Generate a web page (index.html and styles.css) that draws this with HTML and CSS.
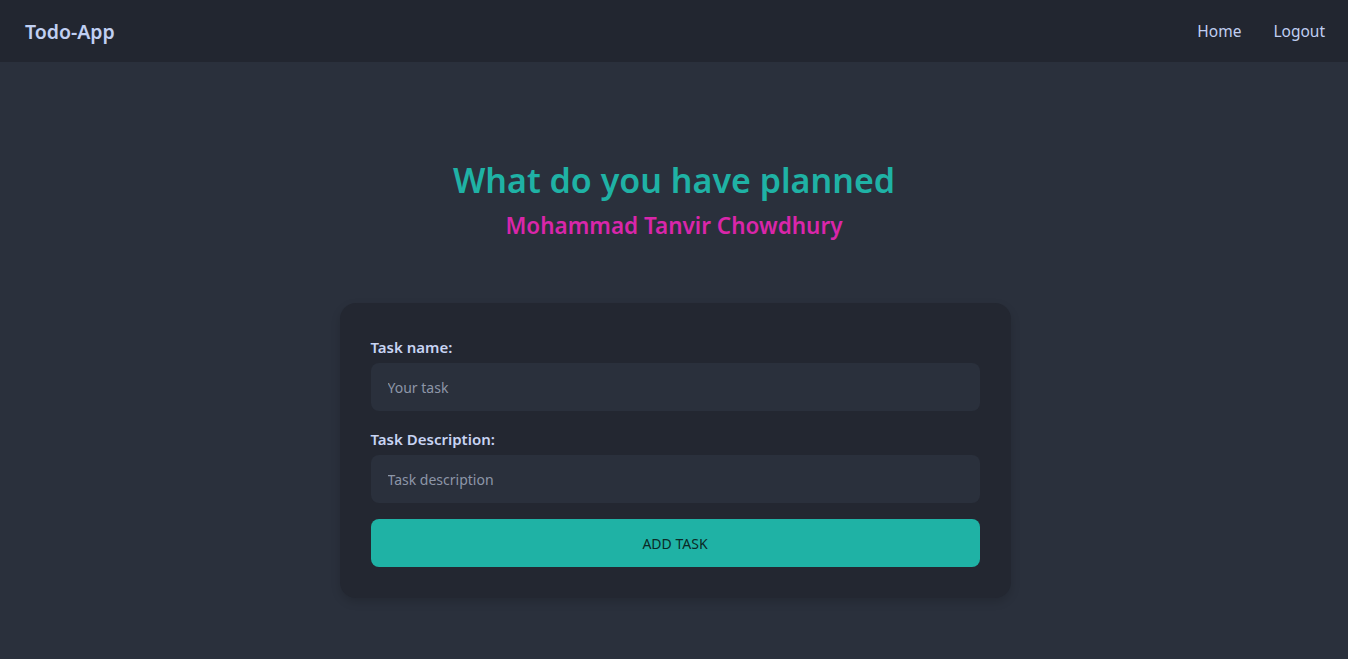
FILE: index.html
```html
<!DOCTYPE html>
<html lang="en">
<head>
<meta charset="utf-8">
<title>Todo-App</title>
<link rel="stylesheet" href="styles.css">
</head>
<body>
<nav class="navbar">
  <a class="brand" href="#">Todo-App</a>
  <div class="nav-links">
    <a href="#">Home</a>
    <a href="#">Logout</a>
  </div>
</nav>
<main class="main">
  <h1 class="title">What do you have planned</h1>
  <h2 class="subtitle">Mohammad Tanvir Chowdhury</h2>
  <form class="card">
    <label class="label" for="task">Task name:</label>
    <input class="input" id="task" type="text" placeholder="Your task">
    <label class="label label-gap" for="desc">Task Description:</label>
    <input class="input" id="desc" type="text" placeholder="Task description">
    <button class="btn" type="button">ADD TASK</button>
  </form>
</main>
</body>
</html>
```
FILE: styles.css
```css
* { box-sizing: border-box; }
html, body { margin: 0; padding: 0; }
body {
  background: #2a303c;
  font-family: "Noto Sans", "Open Sans", sans-serif;
  color: #c8d4f3;
  min-height: 100vh;
}
a { text-decoration: none; color: inherit; }
.navbar {
  height: 62px;
  background: #222630;
  display: flex;
  align-items: center;
  justify-content: space-between;
  padding: 0 23px 0 25px;
}
.brand {
  font-size: 19.5px;
  font-weight: 600;
  color: #c0cff2;
}
.nav-links {
  display: flex;
  gap: 32px;
  font-size: 15.5px;
  color: #c0cff2;
}
.main {
  display: flex;
  flex-direction: column;
  align-items: center;
  padding-top: 98px;
}
.title {
  margin: 0;
  font-size: 34px;
  line-height: 40px;
  font-weight: 600;
  color: #1fb2a5;
}
.subtitle {
  margin: 10px 0 0;
  font-size: 22.5px;
  line-height: 32px;
  font-weight: 600;
  color: #d926aa;
}
.card {
  margin-top: 61px;
  width: 671px;
  margin-left: 2px;
  background: #232731;
  border-radius: 16px;
  padding: 32px 31px 31px;
  display: flex;
  flex-direction: column;
  box-shadow: 0 4px 10px rgba(0,0,0,0.15);
}
.label {
  font-size: 15px;
  line-height: 24px;
  font-weight: 600;
  color: #c8d4f3;
  margin-bottom: 4px;
}
.label-gap { margin-top: 16px; }
.input {
  height: 48px;
  border: 1px solid transparent;
  border-radius: 8px;
  background: #2a303c;
  padding: 0 16px;
  font-family: inherit;
  font-size: 14px;
  color: #c8d4f3;
  outline: none;
}
.input::placeholder { color: #8d96a8; }
.btn {
  margin-top: 16px;
  height: 48px;
  border: none;
  border-radius: 8px;
  background: #1fb2a5;
  color: #0b2a27;
  font-family: inherit;
  font-size: 14px;
  font-weight: 400;
  cursor: pointer;
}
```
